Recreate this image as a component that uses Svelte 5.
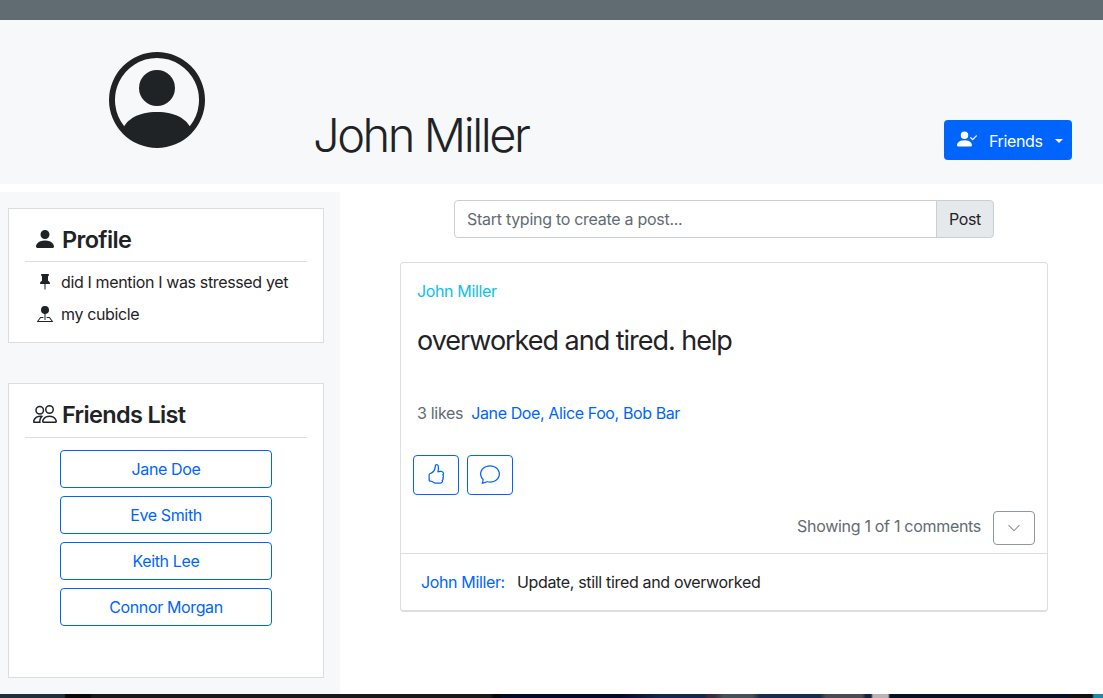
<script>
  const friends = ['Jane Doe', 'Eve Smith', 'Keith Lee', 'Connor Morgan'];
  const likes = 'Jane Doe, Alice Foo, Bob Bar';
  const icons = {
    personCircle: [
      'M11 6a3 3 0 1 1-6 0 3 3 0 0 1 6 0z',
      'M0 8a8 8 0 1 1 16 0A8 8 0 0 1 0 8zm8-7a7 7 0 0 0-5.468 11.37C3.242 11.226 4.805 10 8 10s4.757 1.225 5.468 2.37A7 7 0 0 0 8 1z'
    ],
    personCheck: [
      'M15.854 5.146a.5.5 0 0 1 0 .708l-3 3a.5.5 0 0 1-.708 0l-1.5-1.5a.5.5 0 0 1 .708-.708L12.5 7.793l2.646-2.647a.5.5 0 0 1 .708 0z',
      'M1 14s-1 0-1-1 1-4 6-4 6 3 6 4-1 1-1 1H1zm5-6a3 3 0 1 0 0-6 3 3 0 0 0 0 6z'
    ],
    person: ['M3 14s-1 0-1-1 1-4 6-4 6 3 6 4-1 1-1 1H3zm5-6a3 3 0 1 0 0-6 3 3 0 0 0 0 6z'],
    pin: [
      'M4.146.146A.5.5 0 0 1 4.5 0h7a.5.5 0 0 1 .5.5c0 .68-.342 1.174-.646 1.479-.126.125-.25.224-.354.298v4.431l.078.048c.203.127.476.314.751.555C12.36 7.775 13 8.527 13 9.5a.5.5 0 0 1-.5.5h-4v4.5c0 .276-.224 1.5-.5 1.5s-.5-1.224-.5-1.5V10h-4a.5.5 0 0 1-.5-.5c0-.973.64-1.725 1.17-2.189A5.921 5.921 0 0 1 5 6.708V2.277a2.77 2.77 0 0 1-.354-.298C4.342 1.674 4 1.179 4 .5a.5.5 0 0 1 .146-.354z'
    ],
    pinMap: [
      'M3.1 11.2a.5.5 0 0 1 .4-.2H6a.5.5 0 0 1 0 1H3.75L1.5 15h13l-2.25-3H10a.5.5 0 0 1 0-1h2.5a.5.5 0 0 1 .4.2l3 4a.5.5 0 0 1-.4.8H.5a.5.5 0 0 1-.4-.8l3-4z',
      'M4 4a4 4 0 1 1 4.5 3.969V13.5a.5.5 0 0 1-1 0V7.97A4 4 0 0 1 4 3.999z'
    ],
    people: [
      'M15 14s1 0 1-1-1-4-5-4-5 3-5 4 1 1 1 1h8zm-7.978-1A.261.261 0 0 1 7 12.996c.001-.264.167-1.03.76-1.72C8.312 10.629 9.282 10 11 10c1.717 0 2.687.63 3.24 1.276.593.69.758 1.457.76 1.72l-.008.002a.274.274 0 0 1-.014.002H7.022zM11 7a2 2 0 1 0 0-4 2 2 0 0 0 0 4zm3-2a3 3 0 1 1-6 0 3 3 0 0 1 6 0zM6.936 9.28a5.88 5.88 0 0 0-1.23-.247A7.35 7.35 0 0 0 5 9c-4 0-5 3-5 4 0 .667.333 1 1 1h4.216A2.238 2.238 0 0 1 5 13c0-1.01.377-2.042 1.09-2.904.243-.294.526-.569.846-.816zM4.92 10A5.493 5.493 0 0 0 4 13H1c0-.26.164-1.03.76-1.724.545-.636 1.492-1.256 3.16-1.275zM1.5 5.5a3 3 0 1 1 6 0 3 3 0 0 1-6 0zm3-2a2 2 0 1 0 0 4 2 2 0 0 0 0-4z'
    ],
    thumb: [
      'M8.864.046C7.908-.193 7.02.53 6.956 1.466c-.072 1.051-.23 2.016-.428 2.59-.125.36-.479 1.013-1.04 1.639-.557.623-1.282 1.178-2.131 1.41C2.685 7.288 2 7.87 2 8.72v4.001c0 .845.682 1.464 1.448 1.545 1.07.114 1.564.415 2.068.723l.048.03c.272.165.578.348.97.484.397.136.861.217 1.466.217h3.5c.937 0 1.599-.477 1.934-1.064a1.86 1.86 0 0 0 .254-.912c0-.152-.023-.312-.077-.464.201-.263.38-.578.488-.901.11-.33.172-.762.004-1.149.069-.13.12-.269.159-.403.077-.27.113-.568.113-.857 0-.288-.036-.585-.113-.856a2.144 2.144 0 0 0-.138-.362 1.9 1.9 0 0 0 .234-1.734c-.206-.592-.682-1.1-1.2-1.272-.847-.282-1.803-.276-2.516-.211a9.84 9.84 0 0 0-.443.05 9.365 9.365 0 0 0-.062-4.509A1.38 1.38 0 0 0 9.125.111L8.864.046zM11.5 14.721H8c-.51 0-.863-.069-1.14-.164-.281-.097-.506-.228-.776-.393l-.04-.024c-.555-.339-1.198-.731-2.49-.868-.333-.036-.554-.29-.554-.55V8.72c0-.254.226-.543.62-.65 1.095-.3 1.977-.996 2.614-1.708.635-.71 1.064-1.475 1.238-1.978.243-.7.407-1.768.482-2.85.025-.362.36-.594.667-.518l.262.066c.16.04.258.143.288.255a8.34 8.34 0 0 1-.145 4.725.5.5 0 0 0 .595.644l.003-.001.014-.003.058-.014a8.908 8.908 0 0 1 1.036-.157c.663-.06 1.457-.054 2.11.164.175.058.45.3.57.65.107.308.087.67-.266 1.022l-.353.353.353.354c.043.043.105.141.154.315.048.167.075.37.075.581 0 .212-.027.414-.075.582-.05.174-.111.272-.154.315l-.353.353.353.354c.047.047.109.177.005.488a2.224 2.224 0 0 1-.505.805l-.353.353.353.354c.006.005.041.05.041.17a.866.866 0 0 1-.121.416c-.165.288-.503.56-1.066.56z'
    ],
    chat: [
      'M2.678 11.894a1 1 0 0 1 .287.801 10.97 10.97 0 0 1-.398 2c1.395-.323 2.247-.697 2.634-.893a1 1 0 0 1 .71-.074A8.06 8.06 0 0 0 8 14c3.996 0 7-2.807 7-6 0-3.192-3.004-6-7-6S1 4.808 1 8c0 1.468.617 2.83 1.678 3.894zm-.493 3.905a21.682 21.682 0 0 1-.713.129c-.2.032-.352-.176-.273-.362a9.68 9.68 0 0 0 .244-.637l.003-.01c.248-.72.45-1.548.524-2.319C.743 11.37 0 9.76 0 8c0-3.866 3.582-7 8-7s8 3.134 8 7-3.582 7-8 7a9.06 9.06 0 0 1-2.347-.306c-.52.263-1.639.742-3.468 1.105z'
    ],
    chevron: [
      'M1.646 4.646a.5.5 0 0 1 .708 0L8 10.293l5.646-5.647a.5.5 0 0 1 .708.708l-6 6a.5.5 0 0 1-.708 0l-6-6a.5.5 0 0 1 0-.708z'
    ]
  };
</script>

{#snippet icon(name, size)}
  <svg width={size} height={size} viewBox="0 0 16 16" fill="currentColor" aria-hidden="true">
    {#each icons[name] as d}
      <path {d} fill-rule="evenodd" />
    {/each}
  </svg>
{/snippet}

<div class="page">
  <div class="topbar"></div>
  <header class="banner">
    <div class="avatar">{@render icon('personCircle', 96)}</div>
    <h1>John Miller</h1>
    <button class="friends-btn">
      {@render icon('personCheck', 20)}
      <span>Friends</span>
      <i class="caret"></i>
    </button>
  </header>

  <div class="columns">
    <aside class="sidebar">
      <section class="panel profile">
        <h2><span class="h-icon">{@render icon('person', 24)}</span><span>Profile</span></h2>
        <p class="status">{@render icon('pin', 16)}<span>did I mention I was stressed yet</span></p>
        <p class="place">{@render icon('pinMap', 16)}<span>my cubicle</span></p>
      </section>
      <section class="panel list">
        <h2><span class="h-icon">{@render icon('people', 24)}</span><span>Friends List</span></h2>
        <div class="friend-links">
          {#each friends as friend}
            <button class="friend">{friend}</button>
          {/each}
        </div>
      </section>
    </aside>

    <main class="feed">
      <form class="composer">
        <input type="text" placeholder="Start typing to create a post..." />
        <button type="button">Post</button>
      </form>
      <article class="post">
        <a class="author" href="#author">John Miller</a>
        <p class="message">overworked and tired. help</p>
        <p class="likes"><span>3 likes</span><a href="#likes">{likes}</a></p>
        <div class="actions">
          <button aria-label="Like">{@render icon('thumb', 20)}</button>
          <button aria-label="Comment">{@render icon('chat', 20)}</button>
        </div>
        <div class="comments-bar">
          <span>Showing 1 of 1 comments</span>
          <button aria-label="Toggle comments">{@render icon('chevron', 14)}</button>
        </div>
        <div class="comment">
          <a href="#commenter">John Miller:</a><span>Update, still tired and overworked</span>
        </div>
      </article>
    </main>
  </div>
  <div class="backdrop"></div>
</div>

<style>
  :global(body) {
    margin: 0;
  }
  .page,
  .page * {
    box-sizing: border-box;
  }
  .page {
    --blue: #0065ff;
    --ink: #1f2326;
    --gray: #616c72;
    --line: #d9dee1;
    display: flex;
    flex-direction: column;
    width: 1103px;
    height: 698px;
    overflow: hidden;
    background: #fff;
    color: var(--ink);
    font: 430 16px/24px Inter, sans-serif;
    letter-spacing: -0.36px;
  }
  h1,
  h2,
  p {
    margin: 0;
  }
  svg {
    display: block;
    flex: none;
  }
  button,
  input {
    margin: 0;
    padding: 0;
    font: inherit;
    letter-spacing: inherit;
  }
  a {
    color: var(--blue);
    text-decoration: none;
  }
  .topbar {
    flex: none;
    height: 20px;
    background: #616c72;
  }
  .banner {
    flex: none;
    display: flex;
    height: 164px;
    padding-right: 31px;
    background: #f7f8fa;
  }
  .avatar {
    width: 313px;
    padding: 32px 0 0 109px;
  }
  h1 {
    flex: 1;
    padding-top: 86px;
    font-size: 47px;
    font-weight: 340;
    line-height: 58px;
    letter-spacing: -2.45px;
  }
  .friends-btn {
    display: flex;
    align-items: center;
    width: 128px;
    height: 40px;
    margin-top: 100px;
    padding-left: 13px;
    border: 0;
    border-radius: 4px;
    background: var(--blue);
    color: #fff;
  }
  .friends-btn svg {
    margin-bottom: 2px;
  }
  .friends-btn span {
    width: 66px;
    margin-left: 12px;
    padding-top: 2px;
    text-align: left;
  }
  .caret {
    border: 4px solid transparent;
    border-top-color: #fff;
    border-bottom: 0;
    margin-top: 2px;
  }
  .columns {
    flex: none;
    display: flex;
    height: 502px;
    margin-top: 8px;
  }
  .sidebar {
    display: flex;
    flex-direction: column;
    gap: 40px;
    width: 340px;
    padding: 16px 16px 16px 8px;
    background: #f7f8fa;
  }
  .panel {
    padding: 16px;
    border: 1px solid var(--line);
    background: #fff;
  }
  .profile {
    height: 135px;
  }
  .list {
    flex: 1;
  }
  h2 {
    display: flex;
    align-items: flex-start;
    height: 37px;
    padding-left: 8px;
    border-bottom: 1px solid var(--line);
    font-size: 23.5px;
    font-weight: 560;
    line-height: 30px;
    letter-spacing: -0.66px;
  }
  .list h2 {
    height: 38px;
  }
  .h-icon {
    width: 29px;
    padding-top: 2px;
  }
  .status,
  .place {
    display: flex;
    align-items: center;
    gap: 8px;
    margin-top: 8px;
    padding-left: 12px;
  }
  .friend-links {
    display: grid;
    gap: 8px;
    width: 212px;
    margin: 12px 0 0 35px;
  }
  .friend {
    height: 38px;
    border: 1px solid var(--blue);
    border-radius: 4px;
    background: #fff;
    color: var(--blue);
  }
  .feed {
    display: flex;
    flex-direction: column;
    padding: 8px 55px 0 60px;
    flex: 1;
  }
  .composer {
    display: flex;
    width: 540px;
    height: 38px;
    margin-left: 54px;
  }
  .composer input {
    flex: 1;
    min-width: 0;
    padding: 0 12px;
    border: 1px solid #c9cfd4;
    border-radius: 4px 0 0 4px;
    background: #fff;
    outline: 0;
    letter-spacing: -0.28px;
  }
  .composer input::placeholder {
    color: var(--gray);
    opacity: 1;
  }
  .composer button {
    width: 58px;
    margin-left: -1px;
    border: 1px solid #c9cfd4;
    border-radius: 0 4px 4px 0;
    background: #e5e9eb;
    color: var(--ink);
  }
  .post {
    display: flex;
    flex-direction: column;
    width: 648px;
    height: 350px;
    margin-top: 24px;
    border: 1px solid #dcdedf;
    border-bottom-width: 2px;
    border-radius: 4px;
  }
  .author {
    margin: 16px 0 0 16px;
    color: #0dc0e8;
  }
  .message {
    margin: 21px 0 0 16px;
    font-size: 27px;
    line-height: 34px;
    letter-spacing: -1.03px;
  }
  .likes {
    display: flex;
    gap: 8px;
    margin: 43px 0 0 16px;
    color: var(--gray);
  }
  .likes span {
    letter-spacing: -0.3px;
  }
  .likes a {
    letter-spacing: -0.39px;
  }
  .actions {
    display: flex;
    gap: 8px;
    margin: 30px 0 0 12px;
  }
  .actions button {
    display: grid;
    place-items: center;
    width: 46px;
    height: 40px;
    padding-bottom: 2px;
    border: 1px solid var(--blue);
    border-radius: 4px;
    background: #fff;
    color: var(--blue);
  }
  .comments-bar {
    display: flex;
    justify-content: flex-end;
    gap: 12px;
    height: 59px;
    padding: 16px 12px 0 0;
    border-bottom: 1px solid #dcdedf;
    color: var(--gray);
    letter-spacing: -0.3px;
  }
  .comments-bar span {
    padding-top: 3px;
  }
  .comments-bar button {
    display: grid;
    place-items: center;
    width: 42px;
    height: 34px;
    border: 1px solid #8f989f;
    border-radius: 4px;
    background: #fff;
    color: #7d878d;
  }
  .comment {
    display: flex;
    gap: 12px;
    padding: 16px 20px;
  }
  .comment span {
    letter-spacing: -0.33px;
  }
  .backdrop {
    flex: none;
    height: 4px;
    background: linear-gradient(
      90deg,
      #202f3c 0 64px,
      #09090b 66px 90px,
      #19181a 92px 490px,
      #060611 494px 500px,
      #030a28 502px 620px,
      #13284a 660px 704px,
      #3a2a42 708px 714px,
      #475059 724px 752px,
      #182c4b 760px 820px,
      #4c4b55 826px 862px,
      #17223c 866px 871px,
      #b9b3b8 873px 888px,
      #071127 890px 1068px,
      #111 1070px 1092px,
      #2186ad 1094px
    );
  }
</style>
